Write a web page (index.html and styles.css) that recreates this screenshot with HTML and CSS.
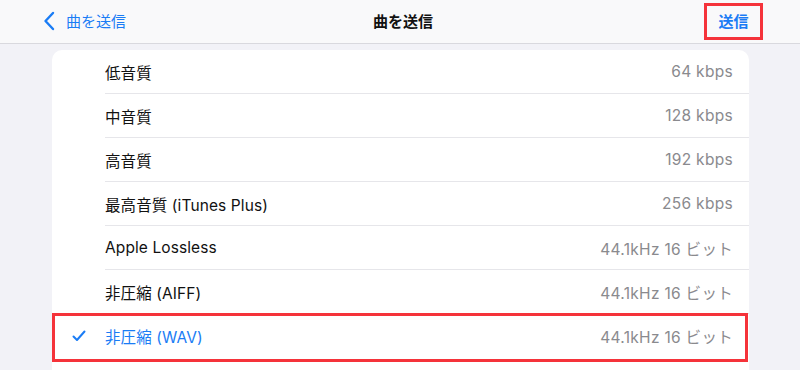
FILE: index.html
```html
<!DOCTYPE html>
<html lang="ja">
<head>
<meta charset="utf-8">
<link rel="stylesheet" href="styles.css">
</head>
<body>
<header class="nav">
  <div class="nav-left">
    <svg class="chev" width="12" height="20" viewBox="0 0 12 20"><path d="M10 2 L2.5 10 L10 18" fill="none" stroke="#1a7cf5" stroke-width="2.4" stroke-linecap="round" stroke-linejoin="round"/></svg>
    <span class="back-label">曲を送信</span>
  </div>
  <div class="nav-title">曲を送信</div>
  <div class="nav-right"><span class="send">送信</span></div>
</header>
<main class="content">
  <ul class="card">
    <li class="row"><span class="check"></span><div class="row-body"><span class="label">低音質</span><span class="value">64 kbps</span></div></li>
    <li class="row"><span class="check"></span><div class="row-body"><span class="label">中音質</span><span class="value">128 kbps</span></div></li>
    <li class="row"><span class="check"></span><div class="row-body"><span class="label">高音質</span><span class="value">192 kbps</span></div></li>
    <li class="row"><span class="check"></span><div class="row-body"><span class="label">最高音質 (iTunes Plus)</span><span class="value">256 kbps</span></div></li>
    <li class="row"><span class="check"></span><div class="row-body"><span class="label">Apple Lossless</span><span class="value">44.1kHz 16 ビット</span></div></li>
    <li class="row"><span class="check"></span><div class="row-body"><span class="label">非圧縮 (AIFF)</span><span class="value">44.1kHz 16 ビット</span></div></li>
    <li class="row selected"><span class="check"><svg width="14" height="12" viewBox="0 0 14 12"><path d="M1.5 6.5 L5 10 L12.5 1.5" fill="none" stroke="#1a7cf5" stroke-width="2" stroke-linecap="round" stroke-linejoin="round"/></svg></span><div class="row-body"><span class="label">非圧縮 (WAV)</span><span class="value">44.1kHz 16 ビット</span></div></li>
  </ul>
</main>
</body>
</html>
```
FILE: styles.css
```css
* { box-sizing: border-box; }
html, body { margin: 0; padding: 0; }
body {
  width: 800px;
  height: 370px;
  overflow: hidden;
  background: #f2f2f7;
  font-family: Inter, "Noto Sans CJK JP", sans-serif;
  font-size: 15px;
  color: #111;
}
.nav {
  height: 44px;
  background: #f9f9fa;
  border-bottom: 1px solid #d9d9de;
  display: grid;
  grid-template-columns: 1fr auto 1fr;
  align-items: center;
  padding: 0 37px 0 43px;
}
.nav-left {
  display: flex;
  align-items: center;
  gap: 11px;
  color: #1a7cf5;
  padding-bottom: 2px;
}
.chev { display: block; }
.back-label { font-size: 15px; }
.nav-title {
  font-weight: 700;
  font-size: 15px;
  padding-bottom: 2px;
}
.nav-right {
  display: flex;
  justify-content: flex-end;
}
.send {
  color: #1a7cf5;
  font-weight: 700;
  font-size: 15px;
  width: 59px;
  height: 37px;
  border: 3px solid #f5333a;
  display: flex;
  align-items: center;
  justify-content: center;
  padding-bottom: 2px;
}
.content {
  padding: 6px 51px 0 52px;
}
.card {
  list-style: none;
  margin: 0;
  padding: 0;
  background: #fff;
  border-radius: 10px;
  height: 330px;
}
.row {
  display: flex;
  height: 44px;
  position: relative;
}
.check {
  width: 53px;
  flex: none;
  display: flex;
  align-items: center;
  justify-content: flex-end;
  padding-right: 19px;
}
.check svg { display: block; }
.row-body {
  flex: 1;
  display: flex;
  justify-content: space-between;
  align-items: center;
  padding-right: 16px;
  border-bottom: 1px solid #e6e6ea;
  font-size: 15.5px;
}
.label { letter-spacing: 0.1px; }
.value { color: #8a8a8e; letter-spacing: 0.3px; }
.row:last-child .row-body { border-bottom: none; }
.selected .label { color: #1a7cf5; }
.selected::after {
  content: "";
  position: absolute;
  left: 0;
  right: 1px;
  top: -1px;
  bottom: -4px;
  border: 3px solid #f5333a;
  pointer-events: none;
}
```
